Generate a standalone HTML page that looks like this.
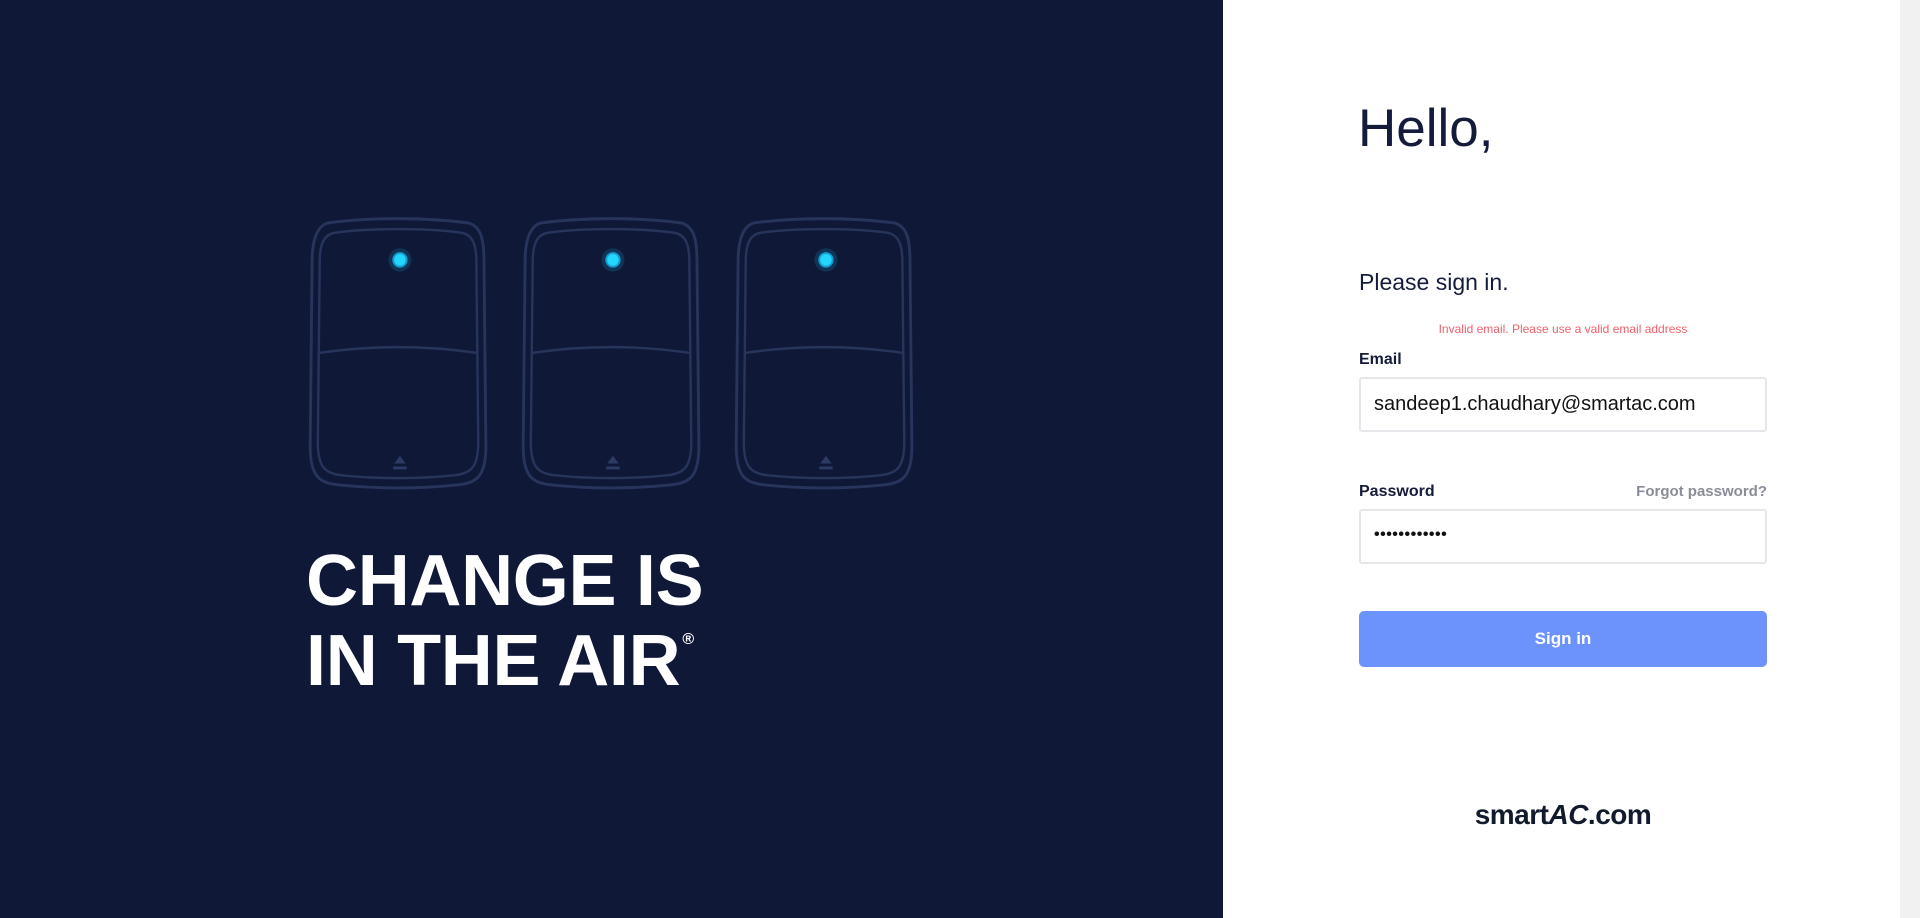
<!DOCTYPE html>
<html><head><meta charset="utf-8"><style>
*{margin:0;padding:0;box-sizing:border-box}
body{width:1920px;height:918px;overflow:hidden;font-family:"Liberation Sans",sans-serif;background:#fff;position:relative}
.left{position:absolute;left:0;top:0;width:1223px;height:918px;background:#101837}
.sb{position:absolute;right:0;top:0;width:20px;height:918px;background:#f1f1f1}
.hl{position:absolute;left:306px;color:#fff;font-weight:bold;font-size:72px;line-height:1;white-space:nowrap;letter-spacing:-0.3px}
.abs{position:absolute}
.inp{position:absolute;left:1359px;width:408px;height:55px;border:2px solid #e6e7ea;border-radius:3px;font-size:20px;color:#111;padding-left:13px;line-height:51px}
</style></head><body>
<div class="left">
<svg class="abs" style="left:0;top:0" width="1223" height="918">
<defs><g id="dev" transform="scale(0.955,0.97)">
<path d="M14 0 C60 -6 116 -6 162 0 C176 4 178 20 178 40 L180 230 C180 262 170 268 150 270 C110 274 66 274 26 270 C6 268 -4 262 -4 230 L-2 40 C-2 20 2 4 14 0Z" fill="none" stroke="#27355c" stroke-width="3"/>
<path d="M22 10 C60 5 116 5 154 10 C166 12 170 22 170 40 L172 226 C172 252 164 258 148 260 C110 264 66 264 28 260 C12 258 4 252 4 226 L6 40 C6 22 10 12 22 10Z" fill="none" stroke="#27355c" stroke-width="2.5"/>
<path d="M5 134 C60 126 116 126 171 134" fill="none" stroke="#27355c" stroke-width="2.5"/>
<circle cx="90" cy="38" r="12" fill="#0e4a6a" opacity=".6"/>
<circle cx="90" cy="38" r="8" fill="#1a9bd0"/>
<circle cx="90" cy="38" r="6" fill="#22d7ff"/>
<path d="M84 248 L90 240 L96 248Z M83 251 H97 V254 H83Z" fill="#2c3b63"/>
</g></defs>
<use href="#dev" x="314" y="223"/>
<use href="#dev" x="527" y="223"/>
<use href="#dev" x="740" y="223"/>
</svg>
<div class="hl" style="top:558px"><span style="position:relative;top:-13px">CHANGE IS</span></div>
<div class="hl" style="top:638px"><span style="position:relative;top:-13px">IN THE AIR</span><span style="font-size:16px;vertical-align:top;position:relative;top:-6px;margin-left:2px">®</span></div>
</div>
<div class="abs" style="left:1358px;top:98px;font-size:53px;color:#151c3b">Hello,</div>
<div class="abs" style="left:1359px;top:269px;font-size:23px;color:#151c3b">Please sign in.</div>
<div class="abs" style="left:1359px;width:408px;top:322px;text-align:center;font-size:12px;color:#f0616c">Invalid email. Please use a valid email address</div>
<div class="abs" style="left:1359px;top:351px;font-size:16px;font-weight:bold;color:#151c3b">Email</div>
<div class="inp" style="top:377px">sandeep1.chaudhary@smartac.com</div>
<div class="abs" style="left:1359px;top:483px;font-size:16px;font-weight:bold;color:#151c3b">Password</div>
<div class="abs" style="right:153px;top:483px;font-size:15px;font-weight:bold;color:#8a8d99">Forgot password?</div>
<div class="inp" style="top:509px;font-size:16px;letter-spacing:0.5px;line-height:48px;font-weight:bold">••••••••••••</div>
<div class="abs" style="left:1359px;top:611px;width:408px;height:56px;background:#6b93fb;border-radius:5px;color:#fff;font-weight:bold;font-size:17px;text-align:center;line-height:56px">Sign in</div>
<div class="abs" style="left:1359px;width:408px;top:799px;text-align:center;font-size:28px;font-weight:bold;color:#121a2e;letter-spacing:-0.5px">smart<span style="font-style:italic">AC</span>.com</div>
<div class="sb"></div>
</body></html>
